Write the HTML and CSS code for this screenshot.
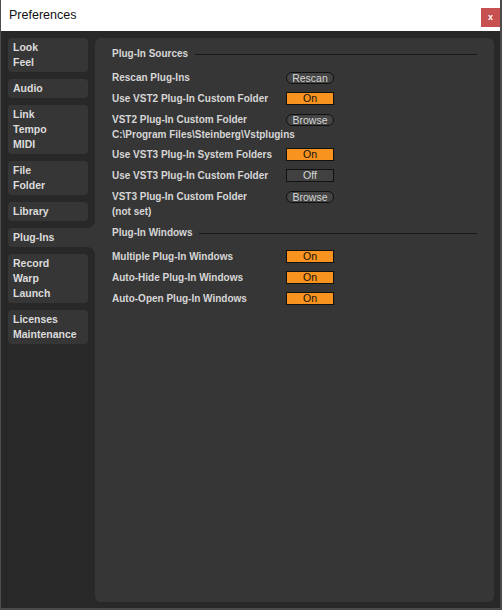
FILE: index.html
```html
<!DOCTYPE html>
<html lang="en">
<head>
    <meta charset="UTF-8">
    <meta name="viewport" content="width=device-width, initial-scale=1.0">
    <title>Preferences</title>
    <link rel="stylesheet" href="styles.css">
</head>
<body>
    <div class="window">
        <div class="titlebar">
            <span class="title">Preferences</span>
            <button class="close">x</button>
        </div>
        <div class="content">
            <nav class="tabs">
                <div class="tab">Look<br>Feel</div>
                <div class="tab">Audio</div>
                <div class="tab">Link<br>Tempo<br>MIDI</div>
                <div class="tab">File<br>Folder</div>
                <div class="tab">Library</div>
                <div class="tab selected">Plug-Ins</div>
                <div class="tab">Record<br>Warp<br>Launch</div>
                <div class="tab">Licenses<br>Maintenance</div>
            </nav>
            <main class="panel">
                <section class="section">
                    <div class="header"><span>Plug-In Sources</span></div>
                    <div class="row">
                        <span class="label">Rescan Plug-Ins</span>
                        <button class="pill">Rescan</button>
                    </div>
                    <div class="row">
                        <span class="label">Use VST2 Plug-In Custom Folder</span>
                        <button class="toggle on">On</button>
                    </div>
                    <div class="row">
                        <span class="label">VST2 Plug-In Custom Folder</span>
                        <button class="pill">Browse</button>
                    </div>
                    <div class="path">C:\Program Files\Steinberg\Vstplugins</div>
                    <div class="row">
                        <span class="label">Use VST3 Plug-In System Folders</span>
                        <button class="toggle on">On</button>
                    </div>
                    <div class="row">
                        <span class="label">Use VST3 Plug-In Custom Folder</span>
                        <button class="toggle">Off</button>
                    </div>
                    <div class="row">
                        <span class="label">VST3 Plug-In Custom Folder</span>
                        <button class="pill">Browse</button>
                    </div>
                    <div class="path">(not set)</div>
                </section>
                <section class="section">
                    <div class="header"><span>Plug-In Windows</span></div>
                    <div class="row">
                        <span class="label">Multiple Plug-In Windows</span>
                        <button class="toggle on">On</button>
                    </div>
                    <div class="row">
                        <span class="label">Auto-Hide Plug-In Windows</span>
                        <button class="toggle on">On</button>
                    </div>
                    <div class="row">
                        <span class="label">Auto-Open Plug-In Windows</span>
                        <button class="toggle on">On</button>
                    </div>
                </section>
            </main>
        </div>
    </div>
</body>
</html>
```

FILE: styles.css
```css
html {
    background: #4a4a4a;
}
body {
    margin: 0;
    font-family: "Liberation Sans", Arial, sans-serif;
}
.window {
    width: 500px;
    height: 608px;
    display: flex;
    flex-direction: column;
    background: #282828;
    box-sizing: border-box;
    border-left: 1px solid #4e4e4e;
}
.titlebar {
    height: 31px;
    flex: none;
    background: #ffffff;
    display: flex;
    align-items: center;
    justify-content: space-between;
    padding: 0 0 0 8px;
}
.title {
    font-size: 12.5px;
    color: #111;
    margin-top: -1px;
}
.close {
    width: 19px;
    height: 19px;
    padding: 0;
    margin-top: 4px;
    border: none;
    background: #c75050;
    color: #fff;
    font-family: "Liberation Sans", Arial, sans-serif;
    font-size: 9px;
    font-weight: bold;
    line-height: 17px;
}
.content {
    flex: 1;
    display: flex;
    gap: 7px;
    padding: 7px 6px 6px 7px;
}
.tabs {
    width: 80px;
    flex: none;
    display: flex;
    flex-direction: column;
    gap: 7px;
}
.tab {
    position: relative;
    background: #363636;
    border-radius: 4px;
    padding: 2px 5px;
    font-size: 10.5px;
    font-weight: bold;
    line-height: 15px;
    color: #dcdcdc;
}
.tab.selected {
    margin-right: -7px;
    border-radius: 4px 0 0 4px;
}
.tab.selected::before,
.tab.selected::after {
    content: "";
    position: absolute;
    right: 0;
    width: 7px;
    height: 7px;
}
.tab.selected::before {
    top: -7px;
    background: radial-gradient(circle at 0 0, #282828 6.5px, #363636 7px);
}
.tab.selected::after {
    bottom: -7px;
    background: radial-gradient(circle at 0 100%, #282828 6.5px, #363636 7px);
}
.panel {
    flex: 1;
    background: #363636;
    border-radius: 6px;
    padding: 8px 17px 0 17px;
    color: #d6d6d6;
    font-size: 10px;
    font-weight: bold;
}
.section + .section {
    margin-top: 6px;
}
.header {
    display: flex;
    align-items: center;
    gap: 7px;
    line-height: 16px;
    margin-bottom: 5px;
}
.header::after {
    content: "";
    flex: 1;
    height: 1px;
    background: #1a1a1a;
}
.row {
    display: flex;
    align-items: center;
    height: 21px;
}
.label {
    width: 174px;
}
.path {
    line-height: 15px;
    margin: -3px 0 2px;
}
.pill,
.toggle {
    width: 48px;
    padding: 0;
    font-family: "Liberation Sans", Arial, sans-serif;
    font-size: 10.5px;
    border: 1px solid #111;
    box-sizing: border-box;
}
.pill {
    height: 12px;
    line-height: 10px;
    border-radius: 6px;
    background: #444;
    color: #d6d6d6;
}
.toggle {
    height: 13px;
    line-height: 11px;
    background: #414141;
    color: #d6d6d6;
}
.toggle.on {
    background: #f7931e;
    color: #111;
}
```
